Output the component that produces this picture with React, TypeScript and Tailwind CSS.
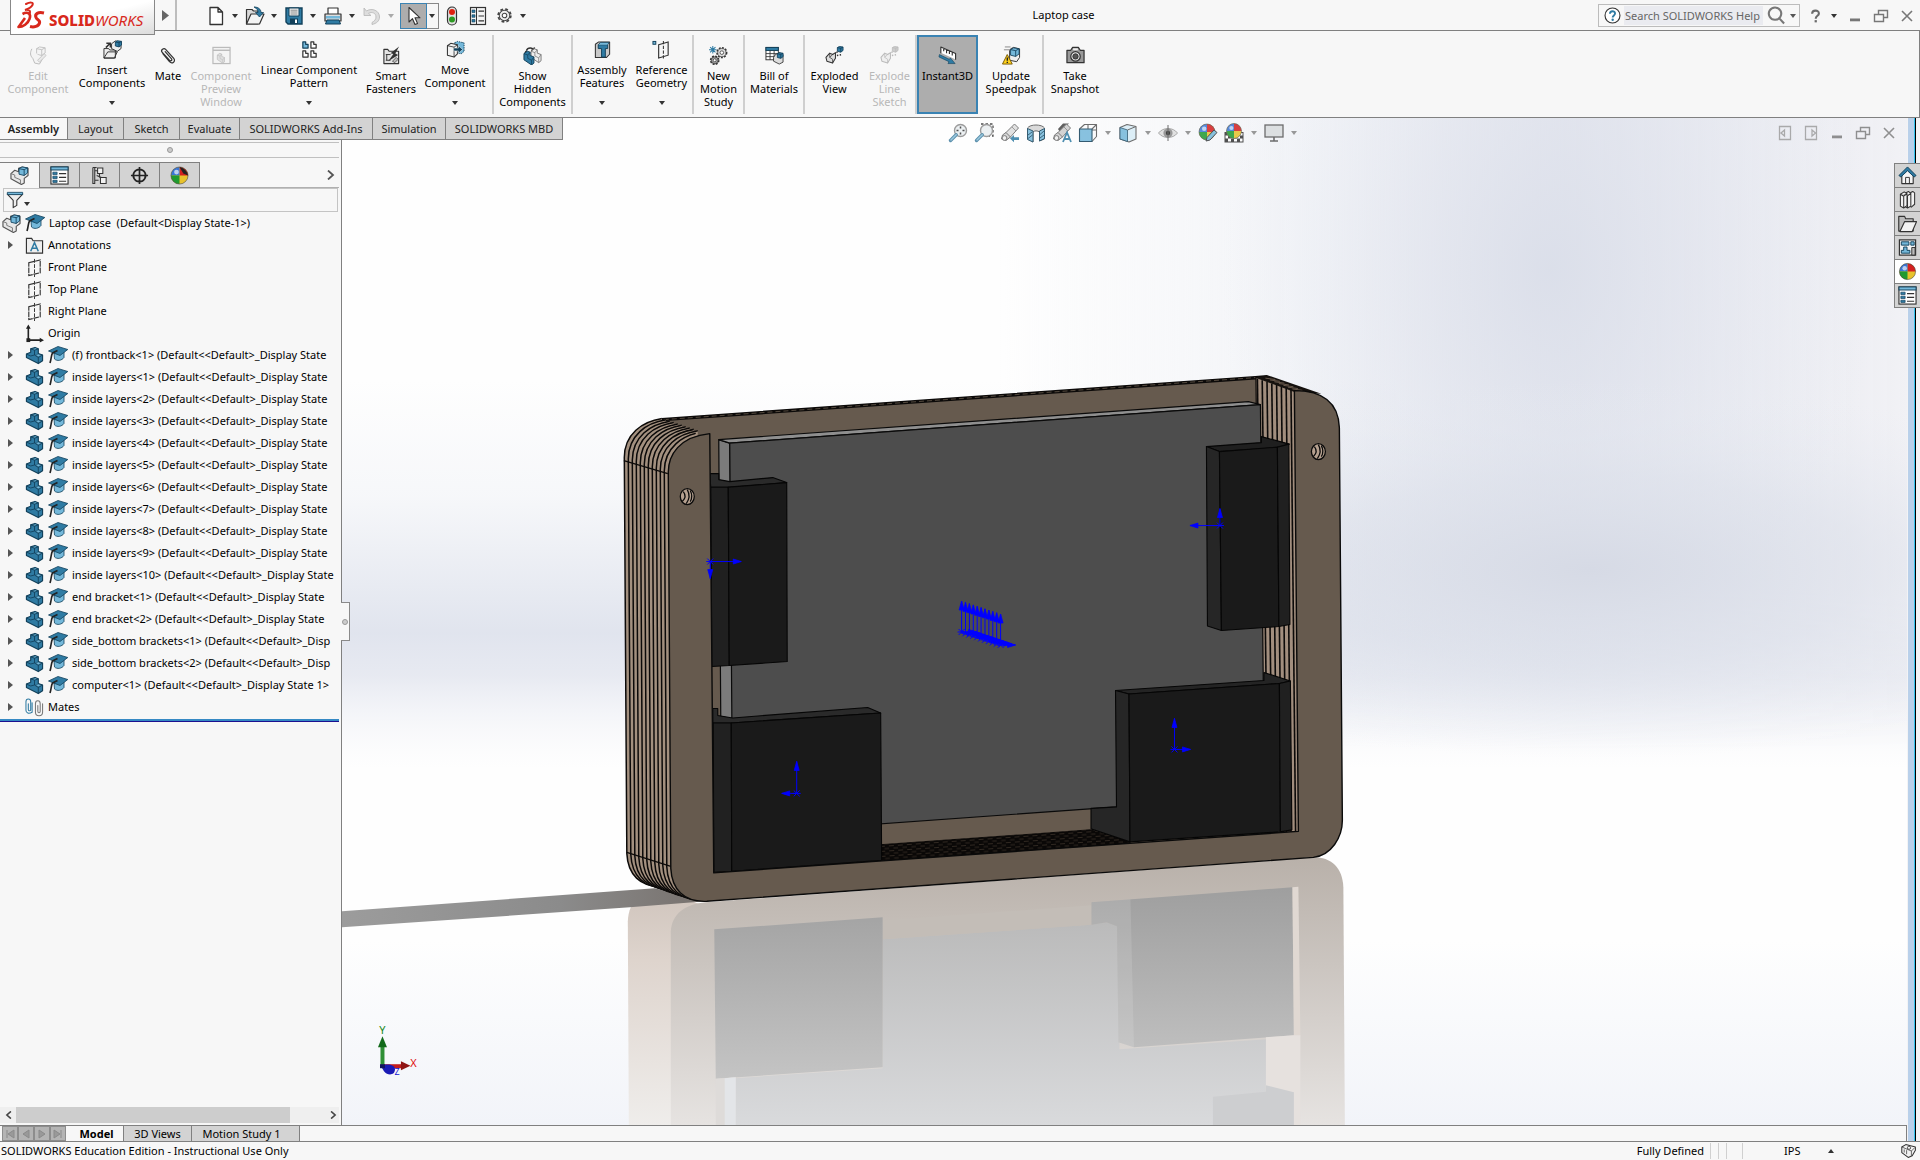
import React from "react";

/* ---------- icons: all drawn on a 20 x 20 grid ---------- */
const K = "#333";
const B = "#2f7ba3";
const D = "#12405a";
const L = "#74b8da";

const Ball = ({ x = 10, y = 10, r = 8.5 }: { x?: number; y?: number; r?: number }) => (
  <g>
    <circle cx={x} cy={y} r={r} fill="#e8c22c" />
    <path d={`M${x} ${y}V${y - r}A${r} ${r} 0 0 1 ${x + r} ${y}Z`} fill="#d42020" />
    <path d={`M${x} ${y}H${x - r}A${r} ${r} 0 0 1 ${x} ${y - r}Z`} fill="#3a76d6" />
    <path d={`M${x} ${y}H${x - r}A${r} ${r} 0 0 0 ${x} ${y + r}Z`} fill="#1f9a30" />
    <circle cx={x - r * 0.35} cy={y - r * 0.4} r={r * 0.28} fill="#fff" opacity=".65" />
    <circle cx={x} cy={y} r={r} fill="none" stroke="#444" strokeWidth=".6" />
  </g>
);

const Cube = ({ x, y, s, c = B }: { x: number; y: number; s: number; c?: string }) => (
  <g stroke={D} strokeWidth=".9" strokeLinejoin="round">
    <path d={`M${x} ${y + s * 0.2}L${x + s * 0.35} ${y}L${x + s} ${y + s * 0.1}V${y + s * 0.7}L${x + s * 0.6} ${y + s}L${x} ${y + s * 0.85}Z`} fill={c} />
    <path d={`M${x} ${y + s * 0.2}L${x + s * 0.6} ${y + s * 0.32}L${x + s} ${y + s * 0.1}M${x + s * 0.6} ${y + s * 0.32}V${y + s}`} fill="none" />
  </g>
);

const PartShape = ({ f, s }: { f: string; s: string }) => (
  <g stroke={s} strokeLinejoin="round">
    <path d="M1.500 7L5 4.500L8 5.500V9L12 10.500V17L9.500 19L1.500 13.500Z" fill={f} strokeWidth="1" />
    <path d="M1.500 7L5.500 8.500V12L9.500 14V19M5.500 8.500L8 5.500M9.500 14L12 10.500" fill="none" strokeWidth=".8" />
  </g>
);

const Magnifier = () => (
  <g>
    <circle cx="12.500" cy="7.500" r="6" fill="#e9eef1" stroke="#8b8b8b" strokeWidth="1.400" />
    <path d="M8.200 11.800L2.500 17.500" stroke="#3f7d9e" strokeWidth="3.400" strokeLinecap="round" />
    <path d="M8.200 11.800L3 17" stroke="#8cc0da" strokeWidth="1.500" strokeLinecap="round" />
  </g>
);

const Gear = ({ x, y, r, f = "#ddd" }: { x: number; y: number; r: number; f?: string }) => (
  <g>
    <circle cx={x} cy={y} r={r} fill={f} stroke={K} strokeWidth="1.800" strokeDasharray="2 1.300" />
    <circle cx={x} cy={y} r={r - 0.7} fill={f} stroke={K} strokeWidth=".7" />
    <circle cx={x} cy={y} r={r * 0.38} fill="#fff" stroke={K} strokeWidth=".8" />
  </g>
);

const Telescope = ({ f = "#ddd" }: { f?: string }) => (
  <g stroke="#666" strokeLinejoin="round">
    <path d="M14.500 1L18.500 5L10 14.500L5.500 10Z" fill={f} />
    <path d="M6 9.500L10.500 14L6 17.500L1.500 16L2.500 12Z" fill="#cfcfcf" />
    <circle cx="4.500" cy="15" r="2.400" fill="#eee" />
    <path d="M12 4L16 8" fill="none" strokeWidth=".7" />
  </g>
);

const ICONS: Record<string, React.ReactNode> = {
  newDoc: <path d="M4 1.500H12L16.500 6V18.500H4ZM12 1.500V6H16.500" fill="#fff" stroke={K} strokeWidth="1.300" strokeLinejoin="round" />,
  open: (
    <g strokeLinejoin="round">
      <path d="M1.500 18V3.500H7L8.500 5H13V18Z" fill="#d8d8d8" stroke={K} strokeWidth="1.200" />
      <path d="M1.500 18L6 8H19L14.500 18Z" fill="#f4f4f4" stroke={K} strokeWidth="1.200" />
      <path d="M9 1C13 1 16 3 16 6.500H18.500L14.500 11L10.500 6.500H13C13 4 12 2.500 9 1Z" fill={B} stroke={D} strokeWidth=".8" />
    </g>
  ),
  save: (
    <g>
      <path d="M2 2H18V18H4L2 16Z" fill={B} stroke={D} strokeWidth="1.400" />
      <path d="M5 2H15V10H5Z" fill="#f3f3f3" stroke={D} />
      <path d="M6.500 4.200H13.500M6.500 6H13.500M6.500 8H13.500" stroke="#888" />
      <path d="M6 12.500H14V18H6Z" fill={D} />
      <path d="M11 13.500H13V17H11Z" fill="#fff" />
    </g>
  ),
  print: (
    <g strokeLinejoin="round">
      <path d="M5 8V2H15V8" fill="#fff" stroke={K} strokeWidth="1.200" />
      <path d="M2 8H18V15H2Z" fill="#dedede" stroke={K} strokeWidth="1.200" />
      <path d="M3 10H17V12.500H3Z" fill={L} />
      <path d="M4 14H16L17.500 18H2.500Z" fill={B} stroke={D} />
    </g>
  ),
  undo: <path d="M2 2V9.500H9L6.500 7.300C10 5.500 14 7 14 11C14 13.500 12.500 15 10 16.500V18.500C14.500 17.500 17.500 15 17.500 11C17.500 4.500 10 1.500 4.500 5Z" fill="#ddd" stroke="#bbb" strokeWidth=".9" />,
  cursor: <path d="M5 1.500V16L8.500 12.700L11 18.500L13.500 17.400L11 11.800H16Z" fill="#fff" stroke={K} strokeWidth="1.100" strokeLinejoin="round" />,
  traffic: (
    <g>
      <rect x="5.500" y="1" width="9" height="18" rx="4.500" fill="#e2e2e2" stroke={K} strokeWidth="1.200" />
      <circle cx="10" cy="6" r="3" fill="#e0210f" />
      <circle cx="10" cy="13.500" r="3" fill="#2d9a22" />
    </g>
  ),
  list: (
    <g>
      <rect x="2.500" y="1.500" width="15" height="17" fill="#f4f4f4" stroke={K} strokeWidth="1.200" />
      <path d="M8.500 1.500V18.500" stroke={K} />
      <path d="M4 4H7V6.500H4ZM4 8.800H7V11.300H4ZM4 13.500H7V16H4Z" fill={B} stroke={D} strokeWidth=".6" />
      <path d="M10.500 5.200H16M10.500 10H16M10.500 14.800H16" stroke={K} strokeWidth="1.200" />
    </g>
  ),
  gear: (
    <g fill="none" stroke="#444">
      <circle cx="10" cy="10" r="7.500" strokeWidth="2" strokeDasharray="3.300 2.590" />
      <circle cx="10" cy="10" r="6.200" fill="#eee" strokeWidth="1.200" />
      <circle cx="10" cy="10" r="2.700" fill="#fff" strokeWidth="1.200" />
    </g>
  ),
  helpBall: (
    <g>
      <circle cx="10" cy="10" r="8.800" fill="#fff" stroke={K} strokeWidth="1.300" />
      <path d="M7 8C7 4 13 4 13 7.700C13 10 10.200 9.800 10.200 12.300" fill="none" stroke={B} strokeWidth="2.200" />
      <circle cx="10.200" cy="15" r="1.400" fill={B} />
    </g>
  ),
  search: <path d="M13 13L18 18.500M8.500 1.500A6.500 6.500 0 1 1 8.400 1.500Z" fill="none" stroke="#777" strokeWidth="2.200" />,
  help: (
    <g>
      <path d="M5.500 7C5.500 1.500 14.500 1.500 14.500 6.500C14.500 9.800 10.300 9.500 10.300 13.500" fill="none" stroke="#6b6b6b" strokeWidth="2.800" />
      <rect x="8.800" y="15.500" width="3" height="3" fill="#6b6b6b" />
    </g>
  ),
  min: <rect x="5" y="12.500" width="10" height="2.800" fill="#777" />,
  restore: <path d="M7.500 8V4.500H16.500V11.500H12.500M3.500 8.500H12.500V15.500H3.500Z" fill="none" stroke="#777" strokeWidth="1.400" />,
  close: <path d="M5 5L15 15M15 5L5 15" stroke="#777" strokeWidth="1.600" />,
  dockL: <path d="M4.500 3.500H15.500V16.500H4.500ZM9.500 7L6 10L9.500 13Z" fill="none" stroke="#999" strokeWidth="1.300" />,
  dockR: <path d="M4.500 3.500H15.500V16.500H4.500ZM11 7L14.500 10L11 13Z" fill="none" stroke="#999" strokeWidth="1.300" />,

  editComp: (
    <g>
      <Cube x={8} y={1} s={9} c="#eee" />
      <path d="M3 3C1 7 1 10 4 13L6 18L11 19L14 14" fill="#eee" stroke={K} />
      <path d="M9 15L16 8L18 10L11 17Z" fill="#ccc" stroke={K} strokeWidth=".8" />
    </g>
  ),
  insertComp: (
    <g>
      <path d="M1 19V9H6L7 10.500H13V19ZM1 19L5 12.500H15L12 19Z" fill="#eee" stroke={K} strokeLinejoin="round" />
      <path d="M3 8L7 4M3.500 3.500H7.800V8" stroke={K} strokeWidth="1.600" fill="none" />
      <path d="M9 4L13 1L19 2V9L15 12L9 9Z" fill="#eee" stroke={K} />
      <Cube x={13} y={0.800} s={6.500} />
    </g>
  ),
  clip: <path d="M4 8L11 16.500C14 19.500 18 16 15.500 13L7 3.500C5 1.500 1.500 4 3.200 6.500L11 15C12.500 16.500 14.500 15 13 13.300L6.500 6" fill="none" stroke={K} strokeWidth="1.300" strokeLinecap="round" />,
  preview: (
    <g>
      <rect x="1" y="1.500" width="18" height="17" fill="#f0f0f0" stroke={K} strokeWidth="1.300" />
      <path d="M1 4.500H19" stroke={K} strokeWidth="1.500" />
      <g transform="translate(4.500 4.500) scale(.72)"><PartShape f="#aaa" s={K} /></g>
    </g>
  ),
  pattern: (
    <g strokeWidth="1.300" strokeLinejoin="round">
      <path d="M3 2H6V4.500H8.500V8.500H3Z" fill={L} stroke={D} />
      <path d="M11.500 2H14.500V4.500H17V8.500H11.500ZM3 11.500H6V14H8.500V18H3ZM11.500 11.500H14.500V14H17V18H11.500Z" fill="#fff" stroke={K} />
    </g>
  ),
  smart: (
    <g strokeLinejoin="round">
      <path d="M2 18.500V3.500H6L7.500 5.500H17.500V18.500Z" fill="#e4e4e4" stroke={K} strokeWidth="1.200" />
      <path d="M4 9H9M5 9V15M4 15H9" stroke={K} />
      <path d="M18 0.500L9 7.500L12 8.500L6.500 16L17 9.500L14 8Z" fill={K} />
      <path d="M11 16L15 12L17 14L13.500 17.500Z" fill="#bbb" stroke={K} strokeWidth=".7" />
    </g>
  ),
  move: (
    <g strokeLinejoin="round">
      <path d="M9 3L12 1.500L19 3V12L16 14.500L9 13Z" fill={L} stroke={D} strokeDasharray="1.500 1" />
      <path d="M1.500 6L5 3.500L12 5V14.500L8.500 18L1.500 16Z" fill="#f2f2f2" stroke={K} strokeWidth="1.100" />
      <path d="M1.500 6L8.500 7.500V18M8.500 7.500L12 5" fill="none" stroke={K} strokeWidth=".9" />
      <path d="M8 8.500H13V6L17.500 10L13 14V11.500H8Z" fill={D} stroke="#fff" strokeWidth=".5" />
    </g>
  ),
  hidden: (
    <g>
      <path d="M3.500 5C5 1.500 10 1 11.500 5M11.500 5L12 1.500M11.500 5L8.500 4.500M3 5.500L5 8M3 5.500L2 8.500" fill="none" stroke={K} strokeWidth="1.500" />
      <g transform="translate(7 -1.500)"><PartShape f="#eee" s="#777" /></g>
      <g transform="translate(-.5 1)"><PartShape f={B} s={D} /></g>
    </g>
  ),
  features: (
    <g strokeLinejoin="round">
      <path d="M2.500 4.500L6 2H17.500V15L14 18.500H2.500Z" fill="#c9c9c9" stroke={K} strokeWidth="1.100" />
      <path d="M5.500 5H15.500V9H13V18H9V9H5.500Z" fill={B} stroke={D} />
      <path d="M5.500 5L8 2.500H17L15.500 5" fill={L} stroke={D} strokeWidth=".8" />
    </g>
  ),
  refGeo: (
    <g>
      <rect x="1" y="1.500" width="3" height="3" fill={L} stroke={D} />
      <path d="M7 5L17 2V16L7 19Z" fill="none" stroke={K} strokeWidth="1.200" />
      <path d="M12 1V20" stroke={K} strokeWidth="1.100" strokeDasharray="3.500 1.500" />
    </g>
  ),
  motion: (
    <g>
      <path d="M4 0V8M0 4H8M1.200 1.200L6.800 6.800M6.800 1.200L1.200 6.800" stroke={B} strokeWidth="1.100" />
      <Gear x={13.500} y={7} r={5} />
      <Gear x={6} y={15} r={4.200} f="#aaa" />
    </g>
  ),
  bom: (
    <g>
      <rect x="1" y="1.500" width="13" height="13" fill="#fff" stroke={K} />
      <rect x="1" y="1.500" width="13" height="3.200" fill={B} stroke={D} />
      <path d="M1 8H14M1 11.200H14M5.300 4.700V14.500M9.600 4.700V14.500" stroke={K} strokeWidth=".9" />
      <path d="M11 9L15 7L19 9V17L15 19L9 16V12Z" fill="#ddd" stroke={K} strokeWidth=".9" />
      <Cube x={13} y={7} s={6} />
    </g>
  ),
  exploded: (
    <g>
      <Cube x={13} y={0.500} s={6} />
      <path d="M1 12L5 7.500L8 9L11 7V13L8 18L2 16Z" fill="#ddd" stroke={K} strokeWidth="1.100" strokeLinejoin="round" />
      <path d="M5 7.500V12L8 14V18M5 12L8 9" fill="none" stroke={K} strokeWidth=".8" />
      <path d="M12 7L14 5.500M12.500 10L18 9" stroke={K} strokeWidth="1.500" strokeDasharray="1.500 1.500" />
    </g>
  ),
  instant: (
    <g strokeLinejoin="round">
      <path d="M3 1L18 8V14L3 7Z" fill="#fff" />
      <path d="M3 7.500V1L18.500 8V14.500M6 2.400V5.500M9 3.800V7.500M12 5.200V8.500M15 6.600V10" stroke={K} fill="none" strokeWidth="1.200" />
      <path d="M1.500 9L12 14L13 12.500L18 18.500L10.500 18.500L11.500 16.500L1 11.500Z" fill={B} stroke={D} strokeWidth=".6" />
    </g>
  ),
  speedpak: (
    <g strokeLinejoin="round">
      <path d="M3 1H9M2 4H8" stroke="#888" />
      <path d="M9 3L12 1.500L18.500 3V12L15.500 16.500L8 15V5Z" fill="#eee" stroke={K} />
      <Cube x={9} y={2} s={9} c={L} />
      <path d="M5.500 9L10.800 19H0.500Z" fill="#ffd21c" stroke="#7a5a00" />
      <path d="M5.600 12V15.500M5.600 16.500V18" stroke="#222" strokeWidth="1.500" />
    </g>
  ),
  camera: (
    <g strokeLinejoin="round">
      <path d="M1 4.500H5L7 1.500H13L15 4.500H19V17.500H1Z" fill="#999" stroke={K} strokeWidth="1.300" />
      <path d="M7.500 2.500H12.500V4.500H7.500Z" fill="#eee" />
      <circle cx="10" cy="11" r="5" fill="#e8e8e8" stroke={K} strokeWidth="1.300" />
      <circle cx="10" cy="11" r="2.800" fill="#555" stroke={K} />
    </g>
  ),

  zoomFit: <g><Magnifier /><path d="M12.500 3.500V5.500M12.500 9.500V11.500M8.500 7.500H10.500M14.500 7.500H16.500" stroke={K} strokeWidth="1.500" /></g>,
  zoomArea: <g><path d="M7 1H19V13H15" fill="none" stroke={K} strokeWidth="1.300" strokeDasharray="2.500 2" /><Magnifier /></g>,
  prevView: <g><Telescope /><path d="M10 15.500L14 12V14.200H19V17H14V19.200Z" fill={B} /></g>,
  section: (
    <g strokeLinejoin="round">
      <path d="M1.500 5C4 1 16 1 18.500 5V16L13.500 18V9C12 7.500 8 7.500 7 9V19L1.500 16Z" fill="#d5d5d5" stroke="#555" />
      <path d="M1.500 5.500L7 8V19L1.500 16.500ZM13.500 8L18.500 5.500V15.500L13.500 18Z" fill={L} stroke={D} />
      <path d="M2 12L6 9M2 15.500L6.500 12M14 11.500L18 8M14 15L18 12" stroke={D} strokeWidth=".9" />
    </g>
  ),
  annotView: <g><path d="M6 6L11 0.500H17L12 5H15L9 11Z" fill="#444" /><Telescope f="#ccc" /><path d="M11 19L15 9.500L19 19M12.500 16H17.500" fill="none" stroke={B} strokeWidth="1.800" /></g>,
  orient: (
    <g strokeLinejoin="round">
      <path d="M1.500 6L6.500 1.500H18.500V13.500L14 18.500M14 6L18.500 1.500M10 1.500V6M18.500 7H14" fill="none" stroke="#555" strokeWidth="1.100" />
      <path d="M1.500 6H14V18.500H1.500Z" fill={L} stroke={D} strokeWidth="1.100" />
    </g>
  ),
  style: (
    <g strokeLinejoin="round">
      <path d="M2 4.500L9 1.500L18 3.500V16L11 19L2 16Z" fill="#d8edf7" stroke="#555" strokeWidth="1.100" />
      <path d="M2 4.500L9.500 7V18.500L2 16Z" fill={L} stroke={D} strokeWidth=".8" />
      <path d="M9.500 7L18 3.500" stroke="#555" />
    </g>
  ),
  eye: (
    <g>
      <path d="M0.500 10C5 4 15 4 19.500 10C15 16 5 16 0.500 10Z" fill="#ddd" stroke="#999" />
      <circle cx="10" cy="10" r="4.600" fill="#888" />
      <circle cx="10" cy="10" r="2.200" fill="#222" />
      <path d="M10 2V18" stroke="#555" />
    </g>
  ),
  appearance: <g><Ball x={9} y={9} r={8} /><path d="M8 18L9 14.500L16 7L19 9.500L12 17Z" fill={L} stroke={K} /></g>,
  scene: (
    <g>
      <rect x="1" y="9.500" width="18" height="9.500" fill="#fff" stroke={K} />
      <path d="M1 9.500H4V12.500H1ZM4 12.500H7V15.500H4ZM1 15.500H4V19H1ZM7 15.500H10V19H7ZM10 12.500H13V15.500H10ZM13 15.500H16V19H13ZM16 12.500H19V15.500H16ZM14 9.500H16V12.500H14Z" fill="#333" />
      <Ball x={10} y={8} r={7.500} />
    </g>
  ),
  monitor: (
    <g>
      <rect x="1" y="2" width="18" height="12" fill="#d9dcde" stroke="#555" strokeWidth="1.300" />
      <path d="M10 14V18M6 18H14" stroke="#555" strokeWidth="1.600" />
    </g>
  ),

  asm: (
    <g strokeLinejoin="round">
      <path d="M1 8L5 4.500L9 6V2.500L13 1L19 2.500V10L15 13V18L12 19.500L1 13.500Z" fill="#e8e8e8" stroke="#555" strokeWidth="1.200" />
      <path d="M1 8L5 9.500V12L11 14.500V19" fill="none" stroke="#777" />
      <Cube x={9.500} y={1} s={9} c={L} />
    </g>
  ),
  props: (
    <g>
      <rect x="1" y="1" width="18" height="18" fill="#fff" stroke={K} strokeWidth="1.200" />
      <rect x="1" y="1" width="18" height="3.200" fill={L} stroke={D} />
      <path d="M3 6.500H7.500V9H3ZM3 10.700H7.500V13.200H3ZM3 15H7.500V17.300H3Z" fill={B} stroke={D} strokeWidth=".7" />
      <path d="M9.500 8H17M9.500 12H17M9.500 16H17" stroke={K} strokeWidth="1.200" />
    </g>
  ),
  config: (
    <g fill="#f2f2f2" stroke={K} strokeWidth="1.100">
      <path d="M3 1.500H7M5 1.500V18.500H3V1.500M5 5H9M5 15H9M10 8V12" fill="none" />
      <path d="M8 2H13.500V8H8ZM11 12H17V18.500H11Z" />
      <path d="M7 10L12 12" />
    </g>
  ),
  target: <path d="M10 1V19M1 10H19M10 3.500A6.500 6.500 0 1 1 9.900 3.500Z" fill="none" stroke="#222" strokeWidth="1.800" />,
  ball: <Ball />,
  ballRing: <g><Ball r={9} /><path d="M10 1C14 2 18 5 19 10L14 8Z" fill="#222" /></g>,
  funnel: (
    <g strokeLinejoin="round">
      <path d="M1.500 3.500L8 10.500V18.500L12 16V10.500L18.500 3.500Z" fill="#eee" stroke={K} strokeWidth="1.200" />
      <path d="M1.500 1.500H18.500V4H1.500Z" fill={L} stroke={D} strokeWidth=".9" />
    </g>
  ),
  cap: (
    <g strokeLinejoin="round">
      <path d="M6 8L6.500 14C9 16.500 14 15.500 16 12.500V7Z" fill={L} stroke={D} strokeWidth=".8" />
      <path d="M0.500 6L10 1.500L19.800 4.500L12 10.500Z" fill={B} stroke={D} strokeWidth=".8" />
      <path d="M9.500 5.500L4.500 8C3 10.500 3.500 13.500 2 18" fill="none" stroke="#222" strokeWidth="1.600" />
    </g>
  ),
  part: (
    <g strokeLinejoin="round" stroke={D}>
      <path d="M1.500 8.500L6 6.500V3L10.500 1.500L14 3V8L18.500 9.500V15.500L14 18.500L1.500 12Z" fill={B} strokeWidth="1.200" />
      <path d="M6 3L10 4.500L14 3M10 4.500V9.500L14 12L18.500 9.500M14 12V18.500M1.500 8.500L6 10.500L10 9.500" fill="none" strokeWidth=".9" />
      <path d="M7.500 3.200L11 2L13 3L10 4Z" fill={L} strokeWidth=".5" />
      <path d="M11 9.500L14 8.500L17.500 9.700L14 11.300Z" fill={L} strokeWidth=".5" />
    </g>
  ),
  annot: (
    <g>
      <path d="M1.500 18V2.500H7L8.500 5H18.500V18Z" fill="#eee" stroke={K} strokeWidth="1.200" />
      <path d="M6 16L10 7L14 16M7.500 13H12.500" fill="none" stroke={B} strokeWidth="1.600" />
    </g>
  ),
  plane: (
    <g fill="none" stroke={K}>
      <path d="M4 5L16 2V15.500L4 18.500Z" strokeWidth="1.200" strokeDasharray="6 .8" />
      <path d="M10 1V20" strokeDasharray="4 1.500" />
    </g>
  ),
  originAxes: (
    <g fill="#222">
      <path d="M3.500 17V4M3.500 17H17" stroke="#222" strokeWidth="1.700" />
      <path d="M3.500 0.500L1 5H6ZM20 17L15.500 14.500V19.500Z" />
      <rect x="1.500" y="15" width="4" height="4" />
    </g>
  ),
  mates: (
    <g fill="none" stroke={B} strokeWidth="1.100" strokeLinecap="round">
      <path d="M3.500 6V12C3.500 14 6 14 6 12V4C6 0 1 0 1 4V13C1 16 4 17 7.500 15V5" />
      <path d="M13.500 8V14C13.500 16 16 16 16 14V6C16 2 11 2 11 6V15C11 20 18.500 20 18.500 15V6" stroke="#777" />
    </g>
  ),
  home: (
    <g strokeLinejoin="round">
      <path d="M4 9V18.500H16V9L10 4Z" fill="#f5f5f5" stroke={K} strokeWidth="1.200" />
      <path d="M8 18.500V12H12V18.500" fill="none" stroke={K} />
      <path d="M1 10L10 1L19 10L17 11.500L10 5L3 11.500Z" fill={B} stroke={D} />
    </g>
  ),
  books: (
    <g fill="#f2f2f2" stroke={K} strokeWidth="1.100" strokeLinejoin="round">
      <path d="M12 3.500L15.500 1.500L17.500 3V15L14 18L12 17Z" />
      <path d="M7.500 3.500L11 1.500L13.500 3.500V17L10 19L7.500 17.500ZM10 6V19M10 6L13.500 3.500" />
      <path d="M2.500 4.500L6.500 2L9.500 4V16.500L6 19L2.500 17ZM6 6.500V19M2.500 4.500L6 6.500L9.500 4" />
    </g>
  ),
  folder: (
    <g strokeLinejoin="round" stroke={K} strokeWidth="1.200">
      <path d="M0.800 18V2.500H7L8 5H16V18Z" fill="#bbb" />
      <path d="M2 18.500L7 8H19.500L15 18.500Z" fill="#f2f2f2" />
    </g>
  ),
  palette: (
    <g strokeWidth="1">
      <rect x="1.500" y="2" width="17" height="16" fill="#f5f5f5" stroke={K} strokeWidth="1.300" />
      <path d="M3.500 4H11.500V7.500H3.500ZM13.500 4H17V7.500H13.500ZM6 9.500H9.500V13H12.500V16H3.500V13H6Z" fill={L} stroke={D} />
      <path d="M14.500 10H18V18H14.500Z" fill="#bbb" stroke={K} />
    </g>
  ),
  tag: (
    <g strokeLinejoin="round" fill="#f2f2f2" stroke={K}>
      <path d="M1 5L6 2L18 5V9L14 16L9 18L1 12Z" strokeWidth="1.300" />
      <path d="M1 5L13 10L18 5M13 10V16M4 8V12M7 9V14" strokeWidth=".9" />
      <circle cx="10" cy="6" r="2" />
    </g>
  ),
};

const Icon = ({ n, className = "size-5" }: { n: string; className?: string }) => (
  <svg viewBox="0 0 20 20" className={`shrink-0 ${className}`} aria-hidden="true">
    {ICONS[n]}
  </svg>
);

const Caret = ({ className = "text-[#333]" }: { className?: string }) => (
  <svg viewBox="0 0 6 4" className={`h-[4px] w-[6px] shrink-0 ${className}`} aria-hidden="true">
    <path d="M0 0H6L3 4Z" fill="currentColor" />
  </svg>
);

/* ---------- title bar ---------- */
const Logo = () => (
  <div className="z-20 ml-2.5 flex h-[35px] w-[145px] shrink-0 items-center border border-t-0 border-[#888] bg-linear-to-br from-white via-white to-[#dcdcdc] pl-1.5 text-[#d8281c]">
    <svg viewBox="0 0 28 28" className="mb-1 h-7 w-7 shrink-0" fill="none" stroke="currentColor" aria-hidden="true">
      <path d="M9 3C13 1 17 1 15.500 4C14.500 6 11 8 8 9C12 8.500 14 9.500 12.500 13" strokeWidth="2" strokeLinecap="round" />
      <path d="M5.500 13C11 10 14.500 13 12.500 18C11 22.500 6 26 1.500 26L8 17" strokeWidth="2.600" strokeLinejoin="round" />
      <path d="M27 12C21 10.500 17.500 13 19 16.500C20 19 23.500 19 22.500 22C21.500 25.500 17 26.500 13 25.500" strokeWidth="3" />
    </svg>
    <span className="mt-1.5 ml-1 text-[15px] leading-none whitespace-nowrap">
      <b className="font-extrabold">SOLID</b><i>WORKS</i>
    </span>
  </div>
);

const QUICK: [string, string][] = [["newDoc", "New"], ["open", "Open"], ["save", "Save"], ["print", "Print"], ["undo", "Undo"]];

const TitleBar = () => (
  <header className="flex h-[31px] shrink-0 items-start border-b border-[#808080] bg-[#f7f7f7]">
    <Logo />
    <button aria-label="Show menu" className="flex h-[30px] w-[22px] items-center justify-start border-r-2 border-[#bdbdbd] pl-[7px]">
      <svg viewBox="0 0 7 11" className="h-[11px] w-[7px]" aria-hidden="true"><path d="M0 0L7 5.500L0 11Z" fill="#666" /></svg>
    </button>
    <nav className="ml-7 flex h-[31px] items-center">
      {QUICK.map(([n, label]) => (
        <div key={n} className="flex w-[39px] items-center">
          <button aria-label={label} className="flex w-[21px] justify-center"><Icon n={n} /></button>
          <button aria-label={`${label} options`} className="flex h-5 w-[18px] items-center justify-center">
            <Caret className={n === "undo" ? "text-[#aaa]" : "text-[#333]"} />
          </button>
        </div>
      ))}
      <div className="flex h-[26px] w-[39px] border border-[#888]">
        <button aria-label="Select" className="-m-px flex w-[27px] items-center justify-center border border-[#3a83b3] bg-[#adadad]"><Icon n="cursor" /></button>
        <button aria-label="Select options" className="flex flex-1 items-center justify-center"><Caret /></button>
      </div>
      <button aria-label="Rebuild" className="flex w-[26px] justify-center"><Icon n="traffic" /></button>
      <button aria-label="File properties" className="flex w-[26px] justify-center"><Icon n="list" /></button>
      <button aria-label="Options" className="flex w-[26px] justify-center"><Icon n="gear" className="size-[17px]" /></button>
      <button aria-label="More options" className="flex h-5 w-3 items-center justify-center"><Caret /></button>
    </nav>
    <h1 className="flex-1 self-center text-center">Laptop case</h1>
    <form className="mt-1 mr-2 flex h-[23px] w-[202px] items-center border border-[#bcbcbc]">
      <Icon n="helpBall" className="ml-[5px] size-[17px]" />
      <input aria-label="Search SOLIDWORKS Help" placeholder="Search SOLIDWORKS Help" className="ml-[3px] h-[19px] w-[139px] bg-[#eaebf0] px-px outline-none placeholder:text-[#666]" />
      <button type="button" aria-label="Search" className="ml-1"><Icon n="search" className="size-[19px]" /></button>
      <button type="button" aria-label="Search options" className="flex flex-1 justify-center"><Caret className="text-[#555]" /></button>
    </form>
    <div className="flex h-[31px] items-center">
      <button aria-label="Help"><Icon n="help" className="h-4 w-[15px]" /></button>
      <button aria-label="Help options" className="flex h-5 w-[22px] items-center justify-center"><Caret /></button>
      <button aria-label="Minimize" className="flex w-5 justify-end"><Icon n="min" /></button>
      <button aria-label="Restore" className="flex w-[26px] justify-end"><Icon n="restore" /></button>
      <button aria-label="Close" className="mr-[3px] flex w-[26px] justify-end"><Icon n="close" /></button>
    </div>
  </header>
);

/* ---------- command ribbon ---------- */
type Cmd = { icon: string; lines: string; w: string; menu?: boolean; off?: boolean; sep?: boolean; on?: boolean };
const COMMANDS: Cmd[] = [
  { icon: "editComp", lines: "Edit\nComponent", w: "w-[76px]", off: true },
  { icon: "insertComp", lines: "Insert\nComponents", w: "w-[72px]", menu: true },
  { icon: "clip", lines: "Mate", w: "w-[40px]" },
  { icon: "preview", lines: "Component\nPreview\nWindow", w: "w-[66px]", off: true },
  { icon: "pattern", lines: "Linear Component\nPattern", w: "w-[110px]", menu: true },
  { icon: "smart", lines: "Smart\nFasteners", w: "w-[54px]" },
  { icon: "move", lines: "Move\nComponent", w: "w-[76px]", menu: true, sep: true },
  { icon: "hidden", lines: "Show\nHidden\nComponents", w: "w-[79px]", sep: true },
  { icon: "features", lines: "Assembly\nFeatures", w: "w-[58px]", menu: true },
  { icon: "refGeo", lines: "Reference\nGeometry", w: "w-[63px]", menu: true, sep: true },
  { icon: "motion", lines: "New\nMotion\nStudy", w: "w-[51px]", sep: true },
  { icon: "bom", lines: "Bill of\nMaterials", w: "w-[60px]", sep: true },
  { icon: "exploded", lines: "Exploded\nView", w: "w-[59px]" },
  { icon: "exploded", lines: "Explode\nLine\nSketch", w: "w-[53px]", off: true, sep: true },
  { icon: "instant", lines: "Instant3D", w: "w-[61px]", on: true },
  { icon: "speedpak", lines: "Update\nSpeedpak", w: "w-[64px]", sep: true },
  { icon: "camera", lines: "Take\nSnapshot", w: "w-[62px]" },
];

const cmdTop = (c: Cmd) => (c.menu ? "pt-[5px]" : c.on ? "pt-[9px]" : "pt-[11px]");

const Ribbon = () => (
  <div className="flex h-[87px] shrink-0 items-center border-r border-b border-[#808080] bg-[#f7f7f7]">
    {COMMANDS.map((c) => (
      <button
        key={c.lines}
        disabled={c.off}
        className={`flex h-[79px] shrink-0 flex-col items-center ${c.w} ${cmdTop(c)} ${c.sep ? "border-r-2 border-[#cfcfcf]" : ""} ${c.on ? "mr-0.5 border-2 border-[#3a83b3] bg-[#adadad]" : ""} ${c.off ? "text-[#b8b8b8]" : ""}`}
      >
        <Icon n={c.icon} className={c.off ? "size-[19px] opacity-30 grayscale" : "size-[19px]"} />
        <span className="mt-1 leading-[13px] whitespace-pre">{c.lines}</span>
        {c.menu && <Caret className="mt-3 text-[#333]" />}
      </button>
    ))}
  </div>
);

const TABS: [string, string][] = [
  ["Assembly", "w-[68px]"], ["Layout", "w-[56px]"], ["Sketch", "w-[56px]"], ["Evaluate", "w-[60px]"],
  ["SOLIDWORKS Add-Ins", "w-[133px]"], ["Simulation", "w-[73px]"], ["SOLIDWORKS MBD", "w-[117px]"],
];

const RibbonTabs = () => (
  <div role="tablist" className="z-10 col-span-2 col-start-1 row-start-1 flex self-start justify-self-start">
    {TABS.map(([t, w], i) => (
      <button
        key={t}
        role="tab"
        aria-selected={i === 0}
        className={`h-[22px] border-r border-b border-[#808080] text-[#222] ${w} ${i === 0 ? "bg-[#f7f7f7] font-semibold" : "bg-[#d3d3d3]"}`}
      >
        {t}
      </button>
    ))}
  </div>
);

/* ---------- feature tree ---------- */
const ds = "(Default<<Default>_Display State";
const PARTS = [
  `(f) frontback<1> ${ds}`,
  ...Array.from({ length: 10 }, (_, i) => `inside layers<${i + 1}> ${ds}`),
  `end bracket<1> ${ds}`,
  `end bracket<2> ${ds}`,
  "side_bottom brackets<1> (Default<<Default>_Disp",
  "side_bottom brackets<2> (Default<<Default>_Disp",
  `computer<1> ${ds} 1>`,
];
type Node = { icon: string; text: string; expand?: boolean; part?: boolean };
const NODES: Node[] = [
  { icon: "annot", text: "Annotations", expand: true },
  { icon: "plane", text: "Front Plane" },
  { icon: "plane", text: "Top Plane" },
  { icon: "plane", text: "Right Plane" },
  { icon: "originAxes", text: "Origin" },
  ...PARTS.map((text) => ({ icon: "part", text, expand: true, part: true })),
  { icon: "mates", text: "Mates", expand: true },
];

const PANEL_TABS: [string, string][] = [["asm", "Feature tree"], ["props", "Properties"], ["config", "Configurations"], ["target", "Dimensions"], ["ballRing", "Display"]];

const SidePanel = () => (
  <aside className="relative col-start-1 row-start-2 flex min-h-0 flex-col border-r border-[#808080] bg-[#f7f7f7] pt-0.5">
    <div className="mr-0.5 flex h-4 shrink-0 items-center justify-center border-y border-[#c0c0c0]">
      <span className="size-1.5 rounded-full border border-[#999] bg-[#ccc]" />
    </div>
    <div className="mt-1 mr-0.5 flex h-[26px] shrink-0" role="tablist">
      {PANEL_TABS.map(([n, label], i) => (
        <button
          key={n}
          role="tab"
          aria-label={label}
          aria-selected={i === 0}
          className={`flex w-10 items-center justify-center border-t border-r border-[#808080] ${i === 0 ? "bg-[#f7f7f7]" : "border-b bg-[#d3d3d3]"}`}
        >
          <Icon n={n} className="size-[19px]" />
        </button>
      ))}
      <button aria-label="More tabs" className="flex flex-1 items-center justify-end border-b border-[#b0b0b0] pr-1">
        <svg viewBox="0 0 8 10" className="h-[10px] w-2" aria-hidden="true"><path d="M1 0.500L6 5L1 9.500" fill="none" stroke="#555" strokeWidth="1.800" /></svg>
      </button>
    </div>
    <label className="mr-[3px] ml-[3px] flex h-6 shrink-0 items-center border border-[#c4c4c4] pl-0.5">
      <Icon n="funnel" className="size-[18px]" />
      <Caret className="mt-2 text-[#333]" />
      <input aria-label="Filter tree" className="ml-1 min-w-0 flex-1 bg-transparent outline-none" />
    </label>
    <ul className="mr-0.5 shrink-0 overflow-hidden">
      <li className="flex h-[22px] items-center pl-0.5 whitespace-pre">
        <Icon n="asm" className="size-[19px]" />
        <Icon n="cap" className="mr-1 ml-1 size-5" />
        {"Laptop case  (Default<Display State-1>)"}
      </li>
      {NODES.map((n) => (
        <li key={n.text} className="flex h-[22px] items-center whitespace-pre">
          <span className="w-[25px] shrink-0 pl-2">
            {n.expand && (
              <button aria-label={`Expand ${n.text}`} className="block">
                <svg viewBox="0 0 5 8" className="h-2 w-[5px]" aria-hidden="true"><path d="M0 0L5 4L0 8Z" fill="#555" /></svg>
              </button>
            )}
          </span>
          <Icon n={n.icon} className="mr-1 size-[19px]" />
          {n.part && <Icon n="cap" className="mr-1 size-5" />}
          {n.text}
        </li>
      ))}
    </ul>
    <div className="mt-px mr-0.5 h-[3px] shrink-0 border-b border-[#1c1090] bg-[#3589c4]" />
    <div className="mt-auto mr-0.5 mb-0.5 flex h-4 shrink-0 items-center bg-[#efefef]">
      <button aria-label="Scroll left" className="flex w-4 justify-center"><svg viewBox="0 0 8 10" className="h-2 w-[7px]" aria-hidden="true"><path d="M7 0.500L2 5L7 9.500" fill="none" stroke="#444" strokeWidth="2" /></svg></button>
      <div className="h-full flex-1"><div className="h-full w-[88%] bg-[#cdcdcd]" /></div>
      <button aria-label="Scroll right" className="flex w-3 justify-center"><svg viewBox="0 0 8 10" className="h-2 w-[7px]" aria-hidden="true"><path d="M1 0.500L6 5L1 9.500" fill="none" stroke="#444" strokeWidth="2" /></svg></button>
    </div>
    <button aria-label="Collapse panel" className="absolute top-[462px] -right-[9px] z-10 flex h-[39px] w-[9px] items-center justify-center border border-l-0 border-[#8a8a8a] bg-[#f7f7f7]">
      <span className="size-1.5 rounded-full border border-[#999] bg-[#ccc]" />
    </button>
  </aside>
);

/* ---------- 3D scene ---------- */
const LEFT_END = "M716 433C684 434 668 452 668.500 474L671 869C672 890 684 903 707 902L720 901V434Z";
const FRAME =
  "M710 434C680 437 668 455 668.500 474L671 869C672 890 684 903 707 902L1314 858C1332 856 1343 838 1343 821L1340 428C1339 402 1322 391 1295 391L1299 832L714 873.500Z";

const Axes = ({ x, y, up, side }: { x: number; y: number; up: number; side: number }) => {
  const tipY = y - up;
  const tipX = x + side;
  const sy = Math.sign(up);
  const sx = Math.sign(side);
  return (
    <g stroke="#00f" fill="#00f">
      <path d={`M${x} ${y}V${tipY}M${x} ${y}H${tipX}M${x - 3} ${y - 3}l6 6M${x + 3} ${y - 3}l-6 6M${x - 4} ${y}h8`} />
      <path d={`M${x} ${tipY}l-2.500 ${9 * sy}h5ZM${tipX} ${y}l${-8 * sx} -2.500v5Z`} strokeWidth=".8" />
    </g>
  );
};

const Scene = () => (
  <svg viewBox="342 118 1566 1008" preserveAspectRatio="xMidYMid slice" className="absolute inset-0 h-full w-full" role="img" aria-label="Laptop case assembly model">
    <defs>
      <linearGradient id="band" x1="0" y1="0" x2="0" y2="1">
        <stop offset="0" stopColor="#dfe3ed" stopOpacity="0" />
        <stop offset=".3" stopColor="#dfe3ed" stopOpacity=".25" />
        <stop offset=".65" stopColor="#dfe3ed" stopOpacity=".95" />
        <stop offset=".76" stopColor="#e3e6ef" stopOpacity=".85" />
        <stop offset="1" stopColor="#f4f5f9" stopOpacity="0" />
      </linearGradient>
      <linearGradient id="floor" x1="0" y1="0" x2="0" y2="1">
        <stop offset="0" stopColor="#f2f4f9" stopOpacity="0" />
        <stop offset="1" stopColor="#f2f4f9" />
      </linearGradient>
      <linearGradient id="wash" x1="0" y1="0" x2="1" y2="0">
        <stop offset=".42" stopColor="#eceef4" stopOpacity="0" />
        <stop offset=".62" stopColor="#e8ebf2" stopOpacity=".55" />
        <stop offset=".78" stopColor="#e2e5ee" stopOpacity=".9" />
        <stop offset="1" stopColor="#f1f1f5" />
      </linearGradient>
      <linearGradient id="washFade" x1="0" y1="0" x2="0" y2="1">
        <stop offset="0" stopColor="#fff" />
        <stop offset=".75" stopColor="#fff" />
        <stop offset="1" stopColor="#000" />
      </linearGradient>
      <mask id="washMask"><rect x="342" y="118" width="1566" height="632" fill="url(#washFade)" /></mask>
      <radialGradient id="glowA"><stop offset="0" stopColor="#dadee9" stopOpacity=".9" /><stop offset=".45" stopColor="#dfe2ec" stopOpacity=".5" /><stop offset="1" stopColor="#e8ebf2" stopOpacity="0" /></radialGradient>
      <radialGradient id="glowB"><stop offset="0" stopColor="#d6dae5" /><stop offset=".5" stopColor="#dce0ea" stopOpacity=".6" /><stop offset="1" stopColor="#e8ebf2" stopOpacity="0" /></radialGradient>
      <linearGradient id="rf" gradientUnits="userSpaceOnUse" x1="0" y1="860" x2="0" y2="1126"><stop offset="0" stopColor="#b9b1aa" /><stop offset="1" stopColor="#e6e3e1" /></linearGradient>
      <linearGradient id="rl" gradientUnits="userSpaceOnUse" x1="0" y1="890" x2="0" y2="1126"><stop offset="0" stopColor="#cfc4bc" /><stop offset=".3" stopColor="#ded4cd" /><stop offset="1" stopColor="#efedeb" /></linearGradient>
      <linearGradient id="rb" gradientUnits="userSpaceOnUse" x1="0" y1="890" x2="0" y2="1090"><stop offset="0" stopColor="#9f9f9f" /><stop offset="1" stopColor="#c6c6c6" /></linearGradient>
      <linearGradient id="rc" gradientUnits="userSpaceOnUse" x1="0" y1="920" x2="0" y2="1126"><stop offset="0" stopColor="#bababa" /><stop offset="1" stopColor="#d9dadc" /></linearGradient>
      <linearGradient id="sh" x1="0" y1="0" x2="1" y2="0"><stop offset="0" stopColor="#9c9c9c" /><stop offset=".6" stopColor="#8b8b8b" /><stop offset="1" stopColor="#77716d" /></linearGradient>
      <pattern id="weave" width="9" height="5" patternUnits="userSpaceOnUse" patternTransform="rotate(-4)">
        <rect width="9" height="5" fill="#0a0807" />
        <path d="M0 1.500H5M4.500 4H9" stroke="#3a3028" strokeWidth=".8" />
      </pattern>
    </defs>

    <rect x="342" y="118" width="1566" height="1008" fill="#fefefe" />
    <rect x="342" y="380" width="1566" height="390" fill="url(#band)" />
    <g mask="url(#washMask)">
      <rect x="342" y="118" width="1566" height="632" fill="url(#wash)" />
    </g>
    <ellipse cx="1550" cy="270" rx="330" ry="420" fill="url(#glowA)" />
    <ellipse cx="1590" cy="570" rx="560" ry="190" fill="url(#glowB)" />
    <rect x="342" y="940" width="1566" height="186" fill="url(#floor)" />

    {/* reflection on the floor */}
    <path d="M628 922C629 900 642 893 665 891L700 905V1126H629Z" fill="url(#rl)" />
    <path d="M671 1126V932C672 914 686 905 706 903L1314 858C1332 858 1343 868 1344 888L1345.500 1126Z" fill="url(#rf)" />
    <path d="M883 940L1092 925.500L1107 923L1118 927L1120 1050L1267 1040V1126H735V1079L883 1069Z" fill="url(#rc)" />
    <path d="M883 940V921L1092 906V925.500Z" fill="#c3bdb7" />
    <path d="M714.500 930L883 918V1068L716 1079.500Z" fill="url(#rb)" />
    <path d="M1092 903L1293 888L1294.500 1036L1134.500 1048L1119 1043L1117.500 927L1107 923L1092 925.500Z" fill="url(#rb)" />
    <path d="M1092 903L1131 900L1134.500 1048L1119 1043L1117.500 927L1107 923L1092 925.500Z" fill="#fff" opacity=".12" />
    <path d="M1293 888L1299 887.500L1301 1037L1294.500 1037Z" fill="#e0d8d2" />
    <path d="M1266.500 1038L1294.500 1036H1301V1126H1266.500Z" fill="#e6e1de" />
    <path d="M1213.500 1097.500L1266.500 1092.500V1086L1294.500 1093V1126H1213.500Z" fill="#cdced0" />
    <path d="M716 1079.500L736 1078V1126H716Z" fill="#dedbd9" />
    <path d="M725 1079L736 1078V1126H725Z" fill="#e3e5e8" />

    {/* cast shadow */}
    <path d="M342 912L655 889L706 902L630 908L342 928Z" fill="url(#sh)" />

    {/* back panel and upper edge */}
    <path d="M662 419L1256 377L1300 392V840L705 880Z" fill="#665a4e" />
    <path d="M662 420L1256 378L1268 377" stroke="#0c0a09" strokeWidth="3.500" fill="none" />
    <path d="M664 420L1262 377.500" stroke="#66594b" strokeWidth=".8" strokeDasharray="5 3" fill="none" />

    {/* inner faces of the layers on the right */}
    <path d="M1256.500 378L1268 377L1297 391L1301 832L1262 834Z" fill="#a28e7e" stroke="#0c0a09" strokeWidth="1.200" />
    {[0, 1, 2, 3, 4, 5, 6, 7].map((i) => (
      <path key={i} d={`M${1258 + i * 4.800} ${379 + i * 1.600}L${1264 + i * 4.600} 834`} stroke="#0c0a09" strokeWidth="1.600" />
    ))}
    <path d="M1256 378L1268 375.500L1322 394L1297 393Z" fill="#15110e" />
    {[0, 1, 2, 3, 4, 5, 6].map((i) => (
      <path key={i} d={`M${1266 + i * 4.500} ${378.500 + i * 1.800}l10 1.400`} stroke="#7b6a5b" strokeWidth=".8" />
    ))}

    {/* inner floor between the brackets */}
    <path d="M880 845L1091 830L1131 842.500L1131 846L880 863Z" fill="url(#weave)" />

    {/* laptop */}
    <g stroke="#0a0a0a" strokeWidth="1.200" strokeLinejoin="round">
      <path d="M719 440L730 443.500L733 720L721 717Z" fill="#7b7b7b" />
      <path d="M719 440L1249 402L1261 405L730 443.500Z" fill="#8f8f8f" />
      <path d="M730 443.500L1261 405L1265 797L733 835Z" fill="#4d4d4d" />
    </g>

    {/* brackets */}
    <g stroke="#060606" strokeWidth="1.100" strokeLinejoin="round">
      <path d="M710 474L719 474V480L730 482L773 478L787 483L728 488H711Z" fill="#2a2a2a" />
      <path d="M711 487.500H728.500L729.500 666L712 667Z" fill="#202020" />
      <path d="M728.500 487.500L787 483L787.500 662L729.500 666Z" fill="#1a1a1a" />

      <path d="M1207 447L1248 444L1262 443V437L1290 444.500L1279 448L1220 452Z" fill="#1f1f1f" />
      <path d="M1207 447L1220 452L1222 631L1208 626.500Z" fill="#262626" />
      <path d="M1220 452L1278 447.500L1279.500 627L1222 631Z" fill="#1a1a1a" />
      <path d="M1278 447.500L1289.500 444.500L1290.500 625L1279.500 627Z" fill="#202020" />

      <path d="M713 709L718 709V716L733 718.500L868 708L881 713.500L731 723.500H713Z" fill="#2a2a2a" />
      <path d="M713.500 723.500H731.500L732 872L714 873Z" fill="#212121" />
      <path d="M731.500 723.500L881 713.500L882 861L732 872Z" fill="#1a1a1a" />

      <path d="M1116 691L1264.500 681V673L1291 681.500L1280 684L1129.500 694.500Z" fill="#242424" />
      <path d="M1116 691L1129.500 694.500L1130.500 842.500L1091.500 829.500V809L1117 807.500Z" fill="#262626" />
      <path d="M1129.500 694.500L1280 684L1281 832.500L1130.500 842.500Z" fill="#1a1a1a" />
      <path d="M1280 684L1291 681.500L1292.500 830.500L1281 832.500Z" fill="#202020" />
    </g>

    {/* stacked layers at the left end, back to front */}
    {Array.from({ length: 11 }, (_, i) => (
      <g key={i} transform={`translate(${-44 + i * 4} ${-15 + i * 1.360})`}>
        <clipPath id={`cut${i}`}><rect x="660" y="425" width={i < 10 ? 46 : 40} height="490" /></clipPath>
        <path d={LEFT_END} clipPath={`url(#cut${i})`} fill="#a3907f" stroke="#0c0a09" strokeWidth="1.500" />
      </g>
    ))}
    <path d="M624 461L668 474M627 853L671 867" stroke="#0c0a09" strokeWidth="1.200" />
    <path d={FRAME} fill="#665a4e" stroke="#0a0a0a" strokeWidth="1.400" strokeLinejoin="round" />

    {/* bolt holes */}
    {[[687.500, 497], [1319, 452]].map(([x, y]) => (
      <g key={x} stroke="#0a0a0a">
        <ellipse cx={x} cy={y} rx="7" ry="8" fill="#b5a08f" strokeWidth="1.300" />
        <path d={`M${x - 4} ${y - 5}q4 5 -1 10M${x} ${y - 7}q4 7 -1 14M${x + 3} ${y - 6}q3 6 0 11`} fill="none" strokeWidth="1.300" />
      </g>
    ))}

    {/* component origins */}
    <Axes x={710.500} y={562} up={-17} side={31} />
    <Axes x={1220.500} y={526} up={17} side={-30} />
    <Axes x={797} y={794} up={32} side={-15} />
    <Axes x={1175} y={750} up={31} side={16} />
    {Array.from({ length: 11 }, (_, i) => (
      <Axes key={i} x={962 + i * 3.900} y={632.500 + i * 1.300} up={31} side={15} />
    ))}

    {/* view triad */}
    <path d="M380.500 1067V1046H384.500V1067Z" fill="#2f8f35" />
    <path d="M382.500 1037L378 1048H387Z" fill="#116a1a" />
    <path d="M384 1065H402V1069H384Z" fill="#c41c1c" />
    <path d="M410.500 1066.500L401 1062V1071Z" fill="#8f1515" />
    <path d="M381 1067C386 1064 395 1065 395 1070C395 1076 388 1077 384 1072Z" fill="#1a1ab5" />
    <path d="M380 1065H385V1069H380Z" fill="#14145e" />
    <g className="text-[11px]" textAnchor="middle">
      <text x="382.500" y="1035" fill="#1c8a1c">Y</text>
      <text x="413.500" y="1068" fill="#e01010">X</text>
      <text x="397" y="1076" fill="#1010d0" className="text-[9px]">Z</text>
    </g>
  </svg>
);

const VIEW_TOOLS: [string, string, boolean][] = [
  ["zoomFit", "Zoom to fit", false], ["zoomArea", "Zoom to area", false], ["prevView", "Previous view", false],
  ["section", "Section view", false], ["annotView", "Dynamic annotation views", false], ["orient", "View orientation", true],
  ["style", "Display style", true], ["eye", "Hide or show items", true], ["appearance", "Edit appearance", false],
  ["scene", "Apply scene", true], ["monitor", "View settings", true],
];

const Viewport = () => (
  <section className="relative col-start-2 row-span-2 row-start-1 mr-[13px] overflow-hidden">
    <Scene />
    <div className="absolute inset-x-0 top-1 flex h-[22px] items-center justify-center pr-1 opacity-85">
      {VIEW_TOOLS.map(([n, label, menu]) => (
        <React.Fragment key={n}>
          <button aria-label={label} className="flex w-[26px] justify-center"><Icon n={n} /></button>
          {menu && <button aria-label={`${label} options`} className="flex h-5 w-3.5 items-center justify-center"><Caret className="text-[#888]" /></button>}
        </React.Fragment>
      ))}
    </div>
    <div className="absolute top-1 right-[5px] flex h-[22px] items-center">
      {[["dockL", "Dock left"], ["dockR", "Dock right"], ["min", "Minimize document"], ["restore", "Restore document"], ["close", "Close document"]].map(([n, label]) => (
        <button key={n} aria-label={label} className="flex w-[26px] justify-center opacity-80"><Icon n={n} /></button>
      ))}
    </div>
  </section>
);

const PANES: [string, string][] = [["home", "Resources"], ["books", "Design library"], ["folder", "File explorer"], ["palette", "View palette"], ["ball", "Appearances"], ["props", "Custom properties"]];

const TaskPane = () => (
  <div className="absolute top-[45px] right-0 z-10 flex w-[26px] flex-col border-t border-l border-[#808080]">
    {PANES.map(([n, label]) => (
      <button key={n} aria-label={label} className={`flex h-6 items-center justify-center border-b border-[#808080] ${n === "ball" ? "bg-white" : "bg-[#d3d3d3]"}`}>
        <Icon n={n} className="size-[19px]" />
      </button>
    ))}
  </div>
);

const STEP = ["M4 2V10M11 2L5 6L11 10Z", "M10 2L4 6L10 10Z", "M4 2L10 6L4 10Z", "M10 2V10M3 2L9 6L3 10Z"];

export default function App() {
  return (
    <div className="flex h-screen flex-col overflow-hidden bg-[#f7f7f7] font-['Noto_Sans',sans-serif] text-[11px] leading-4 text-black">
      <TitleBar />
      <Ribbon />
      <div className="relative flex min-h-0 flex-1">
        <main className="grid min-w-0 flex-1 grid-cols-[342px_1fr] grid-rows-[22px_minmax(0,1fr)]">
          <RibbonTabs />
          <SidePanel />
          <Viewport />
        </main>
        <div className="absolute inset-y-0 right-0 -mb-4 flex w-[13px] bg-[#f3f3f5]">
          <span className="ml-px w-[6px] bg-[#b9d0ea]" />
          <span className="w-px bg-[#35c4ee]" />
          <span className="w-px bg-black" />
        </div>
        <TaskPane />
      </div>
      <nav className="mr-[13px] flex h-4 shrink-0 border-t border-r border-[#808080] pl-0.5">
        {STEP.map((d, i) => (
          <button key={d} aria-label={["First tab", "Previous tab", "Next tab", "Last tab"][i]} className="flex w-4 items-center justify-center border border-[#8d8d8d] bg-[#b4b4b4]">
            <svg viewBox="0 0 14 12" className="h-3 w-3.5" aria-hidden="true"><path d={d} fill="#999" stroke="#8a8a8a" /></svg>
          </button>
        ))}
        <button className="w-[58px] border-r border-[#808080] pl-1 leading-[14px] font-bold">Model</button>
        <button className="w-[68px] border-r border-[#808080] bg-[#d3d3d3] leading-[14px]">3D Views</button>
        <button className="w-[108px] border-r border-[#808080] bg-[#d3d3d3] pr-2 leading-[14px]">Motion Study 1</button>
      </nav>
      <footer className="flex h-[19px] shrink-0 items-center border-t border-[#808080] pr-[3px] pl-px">
        <span className="flex-1">SOLIDWORKS Education Edition - Instructional Use Only</span>
        <span className="mr-1.5">Fully Defined</span>
        <span className="h-4 w-2 border-l border-[#d0d0d0]" />
        <span className="h-4 w-2 border-l border-[#d0d0d0]" />
        <span className="h-4 w-4 border-l border-[#d0d0d0]" />
        <button className="flex h-4 w-[159px] items-center border-l border-[#d0d0d0] pl-[41px]">
          IPS
          <Caret className="ml-7 rotate-180 text-[#333]" />
        </button>
        <Icon n="tag" className="size-4" />
      </footer>
    </div>
  );
}
